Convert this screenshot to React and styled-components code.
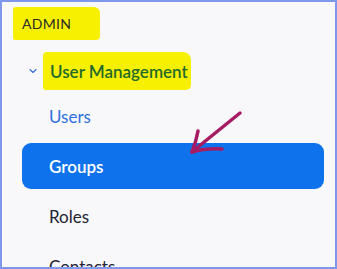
import React from 'react';
import styled, { createGlobalStyle } from 'styled-components';
import { ChevronDown } from 'lucide-react';

const GlobalStyle = createGlobalStyle`
  html, body {
    margin: 0;
    padding: 0;
    background: #f8f8fb;
  }
  * {
    box-sizing: border-box;
  }
`;

const navItems = [
  { label: 'Users', state: 'link' },
  { label: 'Groups', state: 'active' },
  { label: 'Roles', state: 'plain' },
  { label: 'Contacts', state: 'plain' },
];

const itemColor = {
  link: '#2f6fe0',
  active: '#ffffff',
  plain: '#232333',
};

const App = () => {
  return (
    <>
      <GlobalStyle />
      <Frame>
        {/* 섹션 제목 */}
        <SectionLabel>ADMIN</SectionLabel>

        <GroupRow>
          <ChevronDown size={12} strokeWidth={2.2} color="#2f6fe0" />
          <GroupTitle>User Management</GroupTitle>
        </GroupRow>

        <NavList>
          {navItems.map((item) => (
            <NavItem key={item.label} state={item.state}>
              {item.label}
            </NavItem>
          ))}
        </NavList>

        {/* 손으로 그린 화살표 */}
        <Arrow width="337" height="269" viewBox="0 0 337 269">
          <path d="M240 113 L193 151" />
          <path d="M198 131 Q196 142 192 152" />
          <path d="M192 152 Q206 148 222 149" />
        </Arrow>
      </Frame>
    </>
  );
};

const Frame = styled.div`
  position: relative;
  width: 337px;
  height: 269px;
  overflow: hidden;

  border: 2px solid #7f98ec;
  background-color: #f8f8fb;

  font-family: Lato, 'Noto Sans', sans-serif;
`;

const SectionLabel = styled.div`
  width: 87px;
  height: 33px;
  margin: 5px 0 0 11px;
  padding-left: 9px;

  display: flex;
  align-items: center;

  background-color: #f7f000;
  border-radius: 3px 6px 4px 2px;

  color: #2b2b2b;
  font-size: 14px;
  letter-spacing: 0.3px;
`;

const GroupRow = styled.div`
  height: 38px;
  margin-top: 12px;
  padding-left: 25px;

  display: flex;
  align-items: center;
  gap: 4px;
`;

const GroupTitle = styled.span`
  height: 38px;
  padding: 0 3px 0 7px;

  display: flex;
  align-items: center;

  background-color: #f7f000;
  border-radius: 4px 8px 5px 3px;

  color: #236a2c;
  font-size: 17px;
  font-weight: 600;
`;

const NavList = styled.div`
  margin-top: 3px;
  padding: 0 11px 0 20px;

  display: flex;
  flex-direction: column;
  gap: 4px;
`;

const NavItem = styled.div`
  height: 46px;
  padding-left: 27px;

  display: flex;
  align-items: center;

  border-radius: 9px;
  background-color: ${(props) =>
    props.state === 'active' ? '#0e72ed' : 'transparent'};

  color: ${(props) => itemColor[props.state]};
  font-size: 17px;
  font-weight: ${(props) => (props.state === 'active' ? 600 : 400)};
`;

const Arrow = styled.svg`
  position: absolute;
  left: -2px;
  top: -2px;
  pointer-events: none;

  path {
    fill: none;
    stroke: #a51c62;
    stroke-width: 3.5;
    stroke-linecap: round;
    stroke-linejoin: round;
  }
`;

export default App;
